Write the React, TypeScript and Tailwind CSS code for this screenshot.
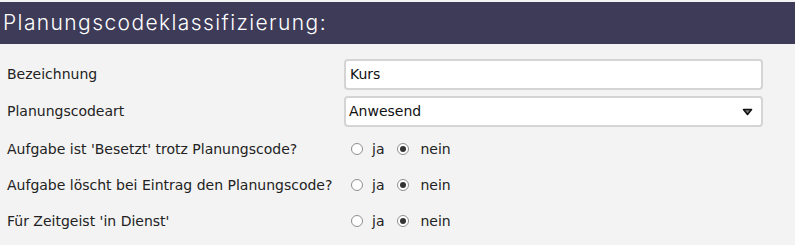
import React from 'react';

const font = { fontFamily: '"DejaVu Sans", "Open Sans", sans-serif' };

function Radio({ checked }: { checked?: boolean }) {
  return (
    <span className="flex h-[12px] w-[12px] items-center justify-center rounded-full border border-[#8f8f8f] bg-white">
      {checked && <span className="h-[6px] w-[6px] rounded-full bg-[#333]" />}
    </span>
  );
}

function YesNo() {
  return (
    <div className="flex items-center pl-[7px] text-[14px] text-[#222]">
      <Radio />
      <span className="ml-[9px]">ja</span>
      <span className="ml-[13px]">
        <Radio checked />
      </span>
      <span className="ml-[11px]">nein</span>
    </div>
  );
}

function Row({ label, children, h }: { label: string; children: React.ReactNode; h: string }) {
  return (
    <div className={`flex items-center ${h}`}>
      <div className="w-[344px] pl-[7px] text-[14px] text-[#222]">{label}</div>
      <div className="w-[419px]">{children}</div>
    </div>
  );
}

export default function App() {
  return (
    <div className="h-[245px] w-[795px] bg-[#f3f3f3] pt-[2px]" style={font}>
      <div className="flex h-[42px] items-center bg-[#3d3b57] pl-[3px]">
        <h1
          className="text-[21px] tracking-[1.4px] text-white"
          style={{ fontFamily: 'Inter, sans-serif', fontWeight: 300 }}
        >
          Planungscodeklassifizierung:
        </h1>
      </div>
      <div className="pt-[15px]">
        <Row label="Bezeichnung" h="h-[31px]">
          <div className="flex h-[31px] items-center rounded-[4px] border-2 border-[#d4d4d4] bg-white px-[4px] text-[14px] text-[#111]">
            Kurs
          </div>
        </Row>
        <div className="h-[6px]" />
        <Row label="Planungscodeart" h="h-[31px]">
          <div className="flex h-[31px] items-center justify-between rounded-[4px] border-2 border-[#d4d4d4] bg-white pl-[3px] pr-[8px] text-[14px] text-[#111]">
            <span>Anwesend</span>
            <svg width="11" height="8" viewBox="0 0 11 8">
              <polygon
                points="1.5,1.5 9.5,1.5 5.5,6.5"
                fill="#777"
                stroke="#111"
                strokeWidth="1.6"
                strokeLinejoin="round"
              />
            </svg>
          </div>
        </Row>
        <div className="pt-[4px]">
          <Row label="Aufgabe ist 'Besetzt' trotz Planungscode?" h="h-[36px]">
            <YesNo />
          </Row>
          <Row label="Aufgabe löscht bei Eintrag den Planungscode?" h="h-[36px]">
            <YesNo />
          </Row>
          <Row label="Für Zeitgeist 'in Dienst'" h="h-[36px]">
            <YesNo />
          </Row>
        </div>
      </div>
    </div>
  );
}
